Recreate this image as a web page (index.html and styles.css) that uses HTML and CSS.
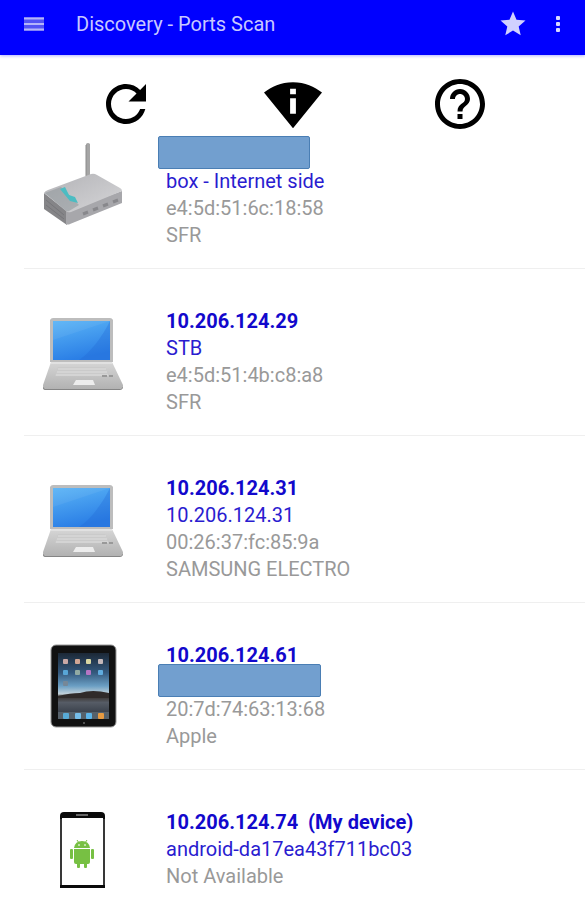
FILE: index.html
```html
<!DOCTYPE html>
<html lang="en">
<head>
<meta charset="utf-8">
<meta name="viewport" content="width=device-width, initial-scale=1">
<title>Discovery - Ports Scan</title>
<link rel="stylesheet" href="styles.css">
</head>
<body>
<header class="appbar">
  <button class="icon-btn" type="button" aria-label="Menu">
    <svg width="20" height="14" viewBox="0 0 20 14"><rect width="20" height="14" fill="#5252f4"/><path d="M0 1.5h20M0 7h20M0 12.500h20" stroke="#b4b4fa" stroke-width="2"/></svg>
  </button>
  <h1 class="title">Discovery - Ports Scan</h1>
  <button class="icon-btn" type="button" aria-label="Favorite">
    <svg width="30" height="30" viewBox="0 0 24 24" fill="#d0d0ff"><path d="M12 17.27 18.18 21l-1.64-7.03L22 9.24l-7.19-.61L12 2 9.19 8.63 2 9.24l5.46 4.73L5.82 21z"/></svg>
  </button>
  <button class="icon-btn more" type="button" aria-label="More options">
    <svg width="6" height="18" viewBox="0 0 6 18" fill="#d8d8ff"><rect x="1" y="1" width="4" height="4" rx="1"/><rect x="1" y="7" width="4" height="4" rx="1"/><rect x="1" y="13" width="4" height="4" rx="1"/></svg>
  </button>
</header>

<main>
  <div class="tools">
    <button class="icon-btn" type="button" aria-label="Refresh">
      <svg width="60" height="60" viewBox="0 0 24 24"><path d="M17.65 6.35C16.2 4.9 14.21 4 12 4c-4.42 0-7.99 3.58-7.99 8s3.57 8 7.99 8c3.73 0 6.84-2.55 7.73-6h-2.08c-.82 2.33-3.04 4-5.65 4-3.31 0-6-2.69-6-6s2.69-6 6-6c1.66 0 3.14.69 4.22 1.78L13 11h7V4l-2.35 2.35z"/></svg>
    </button>
    <button class="icon-btn" type="button" aria-label="Network information">
      <svg width="58" height="58" viewBox="0 0 24 24"><path d="M12 3C6.95 3 3.15 4.85 0 7.23L12 22 24 7.23C20.85 4.85 17.05 3 12 3zm1.2 13h-2.4V9.6h2.4V16zm-2.4-8V5.7h2.4V8h-2.4z"/></svg>
    </button>
    <button class="icon-btn" type="button" aria-label="Help">
      <svg width="60" height="60" viewBox="0 0 24 24"><path d="M11 18h2v-2h-2v2zm1-16C6.48 2 2 6.48 2 12s4.48 10 10 10 10-4.48 10-10S17.52 2 12 2zm0 18c-4.41 0-8-3.59-8-8s3.59-8 8-8 8 3.59 8 8-3.59 8-8 8zm0-14c-2.21 0-4 1.79-4 4h2c0-1.1.9-2 2-2s2 .9 2 2c0 2-3 1.75-3 5h2c0-2.25 3-2.5 3-5 0-2.21-1.79-4-4-4z"/></svg>
    </button>
  </div>

  <svg class="defs" width="0" height="0" aria-hidden="true">
    <defs>
      <linearGradient id="screen" x1="0" y1="0" x2="0.3" y2="1"><stop offset="0" stop-color="#5ab4f6"/><stop offset="1" stop-color="#2b7fe6"/></linearGradient>
      <linearGradient id="base" x1="0" y1="0" x2="0" y2="1"><stop offset="0" stop-color="#d6d6d6"/><stop offset="1" stop-color="#b2b2b2"/></linearGradient>
      <linearGradient id="lid" x1="0" y1="0" x2="1" y2="1"><stop offset="0" stop-color="#b2b2b6"/><stop offset="1" stop-color="#d6d6d8"/></linearGradient>
      <linearGradient id="sky" x1="0" y1="0" x2="0" y2="1"><stop offset="0" stop-color="#1c2836"/><stop offset=".3" stop-color="#34597e"/><stop offset=".5" stop-color="#6b9fc4"/><stop offset=".62" stop-color="#c3d2da"/><stop offset=".66" stop-color="#3a3430"/><stop offset=".75" stop-color="#565c66"/><stop offset="1" stop-color="#29303b"/></linearGradient>
      <symbol id="laptop" viewBox="0 0 80 84">
        <path d="M10 8h57q2 0 3 2v42H7V10q1-2 3-2z" fill="#bdbdbd"/>
        <path d="M10 11h57v39H10z" fill="url(#screen)"/>
        <path d="M67 11v39H36C48 42 59 27 67 11z" fill="#2068d4" opacity=".3"/>
        <path d="M10 11h57L10 30z" fill="#fff" opacity=".06"/>
        <path d="M8 52h61l11 23q0 3-3 4H3q-3-1-3-4z" fill="url(#base)"/>
        <path d="M8 53h61" stroke="#ededed"/>
        <path d="M15 57h47l4 9H12z" fill="#cacaca"/>
        <path d="M15 59h48M14 62h50M13 65h52" stroke="#dedede"/>
        <path d="M33 70h17l2 5H30z" fill="#ededed"/>
        <path d="M59 66h5M66 66h4" stroke="#999" stroke-width="2"/>
        <path d="M0 75q0 3 3 4h74q3-1 3-4v3q-1 2-3 2H3q-3 0-3-2z" fill="#858585"/>
      </symbol>
    </defs>
  </svg>

  <ul class="devices">
    <li class="device">
      <svg class="pic" viewBox="0 0 80 84" role="img" aria-label="Router">
        <path d="M43 1q2-2 4 0v34h-4z" fill="#a5a5a5"/><path d="M43 2v31" stroke="#8c8c8c"/>
        <path d="M1 50 24 68v14L1 66z" fill="#858588"/>
        <path d="M23 68 79 48v12L27 81q-2 1-4 0z" fill="#a7a7ab"/>
        <path d="M1 50q1-2 4-3l43-16q3-1 6 1l23 13q2 1 2 3L28 69q-3 1-5-1z" fill="url(#lid)"/>
        <path d="m2 50 16-6 18 18-10 6q-2 1-4-1z" fill="#8a9295" opacity=".5"/>
        <path d="m17 46 5-2 4 8 6 2 3 6-8-2-5-6z" fill="#4cbcc2"/>
        <path d="m40 71 5-2M50 67l5-2M60 63l5-2M70 59l5-2" stroke="#88888c" stroke-width="3"/>
        <path d="M3 57 21 72M3 62l18 14" stroke="#76767a"/>
      </svg>
      <div class="info">
        <div class="redacted"></div>
        <p class="name">box - Internet side</p>
        <p>e4:5d:51:6c:18:58</p>
        <p>SFR</p>
      </div>
    </li>
    <li class="device">
      <svg class="pic" role="img" aria-label="Laptop"><use href="#laptop"/></svg>
      <div class="info">
        <p class="ip">10.206.124.29</p>
        <p class="name">STB</p>
        <p>e4:5d:51:4b:c8:a8</p>
        <p>SFR</p>
      </div>
    </li>
    <li class="device">
      <svg class="pic" role="img" aria-label="Laptop"><use href="#laptop"/></svg>
      <div class="info">
        <p class="ip">10.206.124.31</p>
        <p class="name">10.206.124.31</p>
        <p>00:26:37:fc:85:9a</p>
        <p>SAMSUNG ELECTRO</p>
      </div>
    </li>
    <li class="device">
      <svg class="pic" viewBox="0 0 80 84" role="img" aria-label="Tablet">
        <rect x="8" y="1" width="65" height="82" rx="5" fill="#111" stroke="#999"/>
        <rect x="15" y="9" width="51" height="66" fill="url(#sky)"/>
        <path d="M15 52q12-3 22-3 12-4 29 0v5H15z" fill="#302b2a"/>
        <path d="M15 68h51v7H15z" fill="#56616b"/>
        <g>
          <rect x="20" y="15" width="5" height="5" rx="1" fill="#c9a8a6"/><rect x="32" y="15" width="5" height="5" rx="1" fill="#d1a694"/><rect x="43" y="15" width="5" height="5" rx="1" fill="#d9d7a2"/><rect x="55" y="15" width="5" height="5" rx="1" fill="#c4b7b9"/>
          <rect x="20" y="26" width="5" height="5" rx="1" fill="#58a6d7"/><rect x="32" y="26" width="5" height="5" rx="1" fill="#91aaa3"/><rect x="43" y="26" width="5" height="5" rx="1" fill="#b575c4"/><rect x="55" y="26" width="5" height="5" rx="1" fill="#60acdf"/>
          <rect x="20" y="37" width="5" height="5" rx="1" fill="#768898"/>
          <rect x="20" y="69" width="6" height="6" rx="1" fill="#58aad6"/><rect x="32" y="69" width="6" height="6" rx="1" fill="#75bde9"/><rect x="43" y="69" width="6" height="6" rx="1" fill="#5cb4e9"/><rect x="55" y="69" width="6" height="6" rx="1" fill="#e69a42"/>
        </g>
        <circle cx="41" cy="79" r="1" fill="#666"/>
      </svg>
      <div class="info">
        <p class="ip">10.206.124.61</p>
        <div class="redacted wide"></div>
        <p>20:7d:74:63:13:68</p>
        <p>Apple</p>
      </div>
    </li>
    <li class="device">
      <svg class="pic" viewBox="0 0 80 84" role="img" aria-label="Android phone">
        <path d="M17 5q0-4 4-4h37q4 0 4 4v72H17z" fill="#0a0a0a"/>
        <path d="M19 7h41v67H19z" fill="#fff"/>
        <path d="M18 8v66M61 8v66" stroke="#666"/>
        <path d="M33 4h12" stroke="#666" stroke-width="2"/>
        <g fill="#77c043">
          <path d="M31 37q1-7 8-7t8 7z"/><path d="M31 38h16v13q0 2-2 2H33q-2 0-2-2z"/>
          <rect x="27" y="38" width="3" height="10" rx="1"/><rect x="48" y="38" width="3" height="10" rx="1"/>
          <rect x="34" y="50" width="3" height="7" rx="1"/><rect x="41" y="50" width="3" height="7" rx="1"/>
        </g>
        <path d="m34 29 2 3M44 29l-2 3" stroke="#77c043"/><circle cx="36" cy="34" r="1" fill="#d6edc6"/><circle cx="42" cy="34" r="1" fill="#d6edc6"/>
      </svg>
      <div class="info">
        <p class="ip">10.206.124.74&nbsp; (My device)</p>
        <p class="name">android-da17ea43f711bc03</p>
        <p>Not Available</p>
      </div>
    </li>
  </ul>
</main>
</body>
</html>
```
FILE: styles.css
```css
* {
  box-sizing: border-box;
}

body {
  margin: 0;
  background: #fff;
  font-family: Roboto, "Liberation Sans", sans-serif;
  font-size: 20px;
  line-height: 27px;
  color: #999;
}

h1,
p,
ul {
  margin: 0;
  padding: 0;
}

.icon-btn {
  display: flex;
  align-items: center;
  justify-content: center;
  padding: 0;
  border: 0;
  background: none;
  cursor: pointer;
}

.appbar {
  display: flex;
  align-items: center;
  height: 55px;
  padding: 0 24px 7px;
  background: #00f;
  box-shadow: 0 1px 3px rgba(0, 0, 255, 0.3);
}

.title {
  flex: 1;
  margin-left: 32px;
  font-size: 20px;
  font-weight: 400;
  color: #c8c8ff;
}

.more {
  margin-left: 27px;
}

.tools {
  display: grid;
  grid-template-columns: repeat(3, 1fr);
  padding: 19px 42px 0;
}

.defs {
  position: absolute;
}

.devices {
  margin-left: 24px;
  list-style: none;
}

.device {
  display: flex;
  gap: 43px;
  padding: 39px 0 19px 19px;
  border-bottom: 1px solid #efefef;
}

.device:first-child {
  padding-top: 7px;
}

.device:last-child {
  border-bottom: 0;
}

.pic {
  flex: none;
  width: 80px;
  height: 84px;
  margin-top: 2px;
}

.info {
  flex: 1;
}

.ip {
  font-weight: 700;
  color: #1208cc;
}

.name {
  color: #2a1cd0;
}

.redacted {
  width: 152px;
  height: 33px;
  margin: -5px 0 -1px -8px;
  border: 1px solid #4a7eb4;
  border-radius: 2px;
  background: #729fcf;
}

.wide {
  width: 163px;
}
```
